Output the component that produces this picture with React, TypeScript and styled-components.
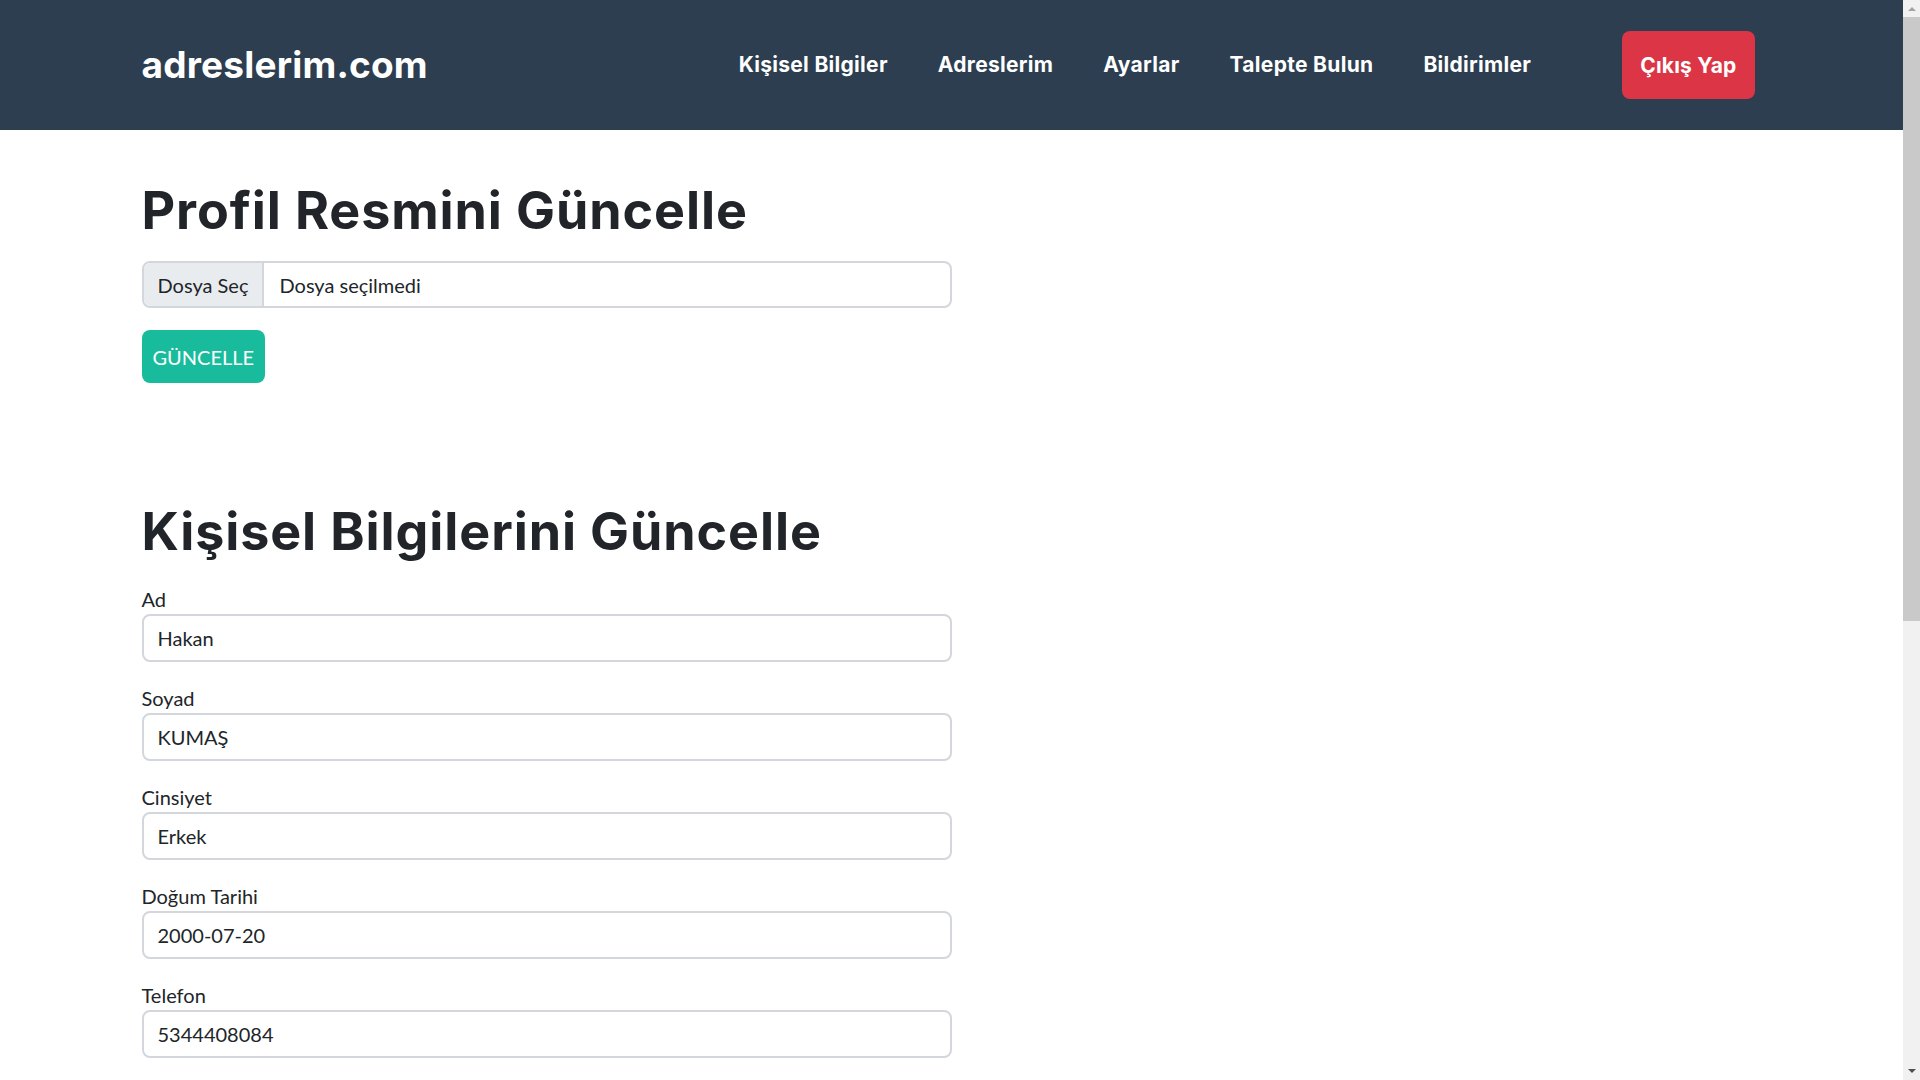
import React from 'react'
import styled, { createGlobalStyle } from 'styled-components'

const GlobalStyle = createGlobalStyle`
  * {
    box-sizing: border-box;
  }
  body {
    margin: 0;
    background: #ffffff;
    color: #212529;
    font-family: Lato, "Open Sans", sans-serif;
    font-size: 20px;
    line-height: 1.5;
  }
`

const SShell = styled.div`
  display: flex;
  align-items: flex-start;
`

const SPage = styled.div`
  flex: 1;
  min-width: 0;
`

const SScrollbar = styled.div`
  flex: 0 0 17px;
  height: 100vh;
  display: flex;
  flex-direction: column;
  background: #f1f1f1;
`

const SScrollArrow = styled.div`
  height: 17px;
  display: flex;
  align-items: center;
  justify-content: center;
`

const SScrollTrack = styled.div`
  flex: 1;
`

const SScrollThumb = styled.div`
  height: 604px;
  background: #c9c9c9;
`

const SNavbar = styled.nav`
  background: #2c3e50;
  height: 130px;
`

const SContainer = styled.div`
  max-width: 1650px;
  margin: 0 auto;
  padding: 0 15px;
`

const SNavInner = styled(SContainer)`
  height: 100%;
  display: flex;
  align-items: center;
`

const SBrand = styled.a`
  color: #ffffff;
  font-family: Inter, "DejaVu Sans", sans-serif;
  font-weight: 700;
  font-size: 37px;
  letter-spacing: 0.2px;
  text-decoration: none;
`

const SNavList = styled.ul`
  display: flex;
  align-items: center;
  list-style: none;
  margin: 0 0 0 auto;
  padding: 0;
`

const SNavLink = styled.a`
  display: block;
  padding: 0 25px;
  color: #ffffff;
  font-family: Inter, "DejaVu Sans", sans-serif;
  font-weight: 700;
  font-size: 21px;
  letter-spacing: 0.3px;
  text-decoration: none;
`

const SLogout = styled.button`
  margin: 0 7px 0 66px;
  height: 68px;
  padding: 0 18px;
  border: none;
  border-radius: 8px;
  background: #dc3545;
  color: #ffffff;
  font-family: Inter, "DejaVu Sans", sans-serif;
  font-weight: 700;
  font-size: 21px;
  letter-spacing: 0.2px;
`

const SMain = styled(SContainer)`
  padding-top: 50px;
  padding-bottom: 200px;
`

const SSection = styled.section<{ $gap?: number }>`
  width: 810px;
  margin-bottom: ${(p) => p.$gap ?? 0}px;
`

const STitle = styled.h1<{ $space: number }>`
  margin: 0 0 ${(p) => p.$space}px;
  font-family: Inter, "DejaVu Sans", sans-serif;
  font-weight: 700;
  font-size: 52px;
  line-height: 62px;
  letter-spacing: 0.9px;
  color: #212529;
`

const SFile = styled.label`
  display: flex;
  height: 47px;
  border: 2px solid #d3d7dc;
  border-radius: 8px;
  overflow: hidden;
`

const SFileButton = styled.span`
  display: flex;
  align-items: center;
  padding: 0 14px;
  background: #e9ecef;
  border-right: 2px solid #d3d7dc;
`

const SFileName = styled.span`
  display: flex;
  align-items: center;
  padding: 0 15px;
`

const SSubmit = styled.button`
  margin-top: 22px;
  height: 53px;
  padding: 0 11px;
  border: none;
  border-radius: 8px;
  background: #18bc9c;
  color: #ffffff;
  font-family: Lato, "Open Sans", sans-serif;
  font-size: 20px;
`

const SGroup = styled.div`
  margin-bottom: 21px;
`

const SLabel = styled.label`
  display: block;
  line-height: 30px;
`

const SInput = styled.input`
  display: block;
  width: 100%;
  height: 48px;
  padding: 0 14px;
  border: 2px solid #d3d7dc;
  border-radius: 8px;
  font-family: Lato, "Open Sans", sans-serif;
  font-size: 20px;
  color: #212529;
  background: #ffffff;
`

const navItems = ['Kişisel Bilgiler', 'Adreslerim', 'Ayarlar', 'Talepte Bulun', 'Bildirimler']

const fields = [
  { label: 'Ad', value: 'Hakan' },
  { label: 'Soyad', value: 'KUMAŞ' },
  { label: 'Cinsiyet', value: 'Erkek' },
  { label: 'Doğum Tarihi', value: '2000-07-20' },
  { label: 'Telefon', value: '5344408084' },
  { label: 'E-posta', value: 'hakan@adreslerim.com' },
]

const Arrow: React.FC<{ up?: boolean }> = ({ up }) => (
  <svg width="8" height="5" viewBox="0 0 8 5">
    <path d={up ? 'M0 5 L4 1 L8 5 Z' : 'M0 0 L4 4 L8 0 Z'} fill={up ? '#a3a3a3' : '#505050'} />
  </svg>
)

const App: React.FC = () => {
  return (
    <>
      <GlobalStyle />
      <SShell>
        <SPage>
          <SNavbar>
            <SNavInner>
              <SBrand href="#">adreslerim.com</SBrand>
              <SNavList>
                {navItems.map((item) => (
                  <li key={item}>
                    <SNavLink href="#">{item}</SNavLink>
                  </li>
                ))}
              </SNavList>
              <SLogout>Çıkış Yap</SLogout>
            </SNavInner>
          </SNavbar>
          <SMain>
            <SSection $gap={118}>
              <STitle $space={19}>Profil Resmini Güncelle</STitle>
              <SFile>
                <SFileButton>Dosya Seç</SFileButton>
                <SFileName>Dosya seçilmedi</SFileName>
              </SFile>
              <SSubmit>GÜNCELLE</SSubmit>
            </SSection>
            <SSection>
              <STitle $space={21}>Kişisel Bilgilerini Güncelle</STitle>
              {fields.map((f) => (
                <SGroup key={f.label}>
                  <SLabel>{f.label}</SLabel>
                  <SInput defaultValue={f.value} />
                </SGroup>
              ))}
              <SSubmit>GÜNCELLE</SSubmit>
            </SSection>
          </SMain>
        </SPage>
        <SScrollbar>
          <SScrollArrow>
            <Arrow up />
          </SScrollArrow>
          <SScrollTrack>
            <SScrollThumb />
          </SScrollTrack>
          <SScrollArrow>
            <Arrow />
          </SScrollArrow>
        </SScrollbar>
      </SShell>
    </>
  )
}

export default App
